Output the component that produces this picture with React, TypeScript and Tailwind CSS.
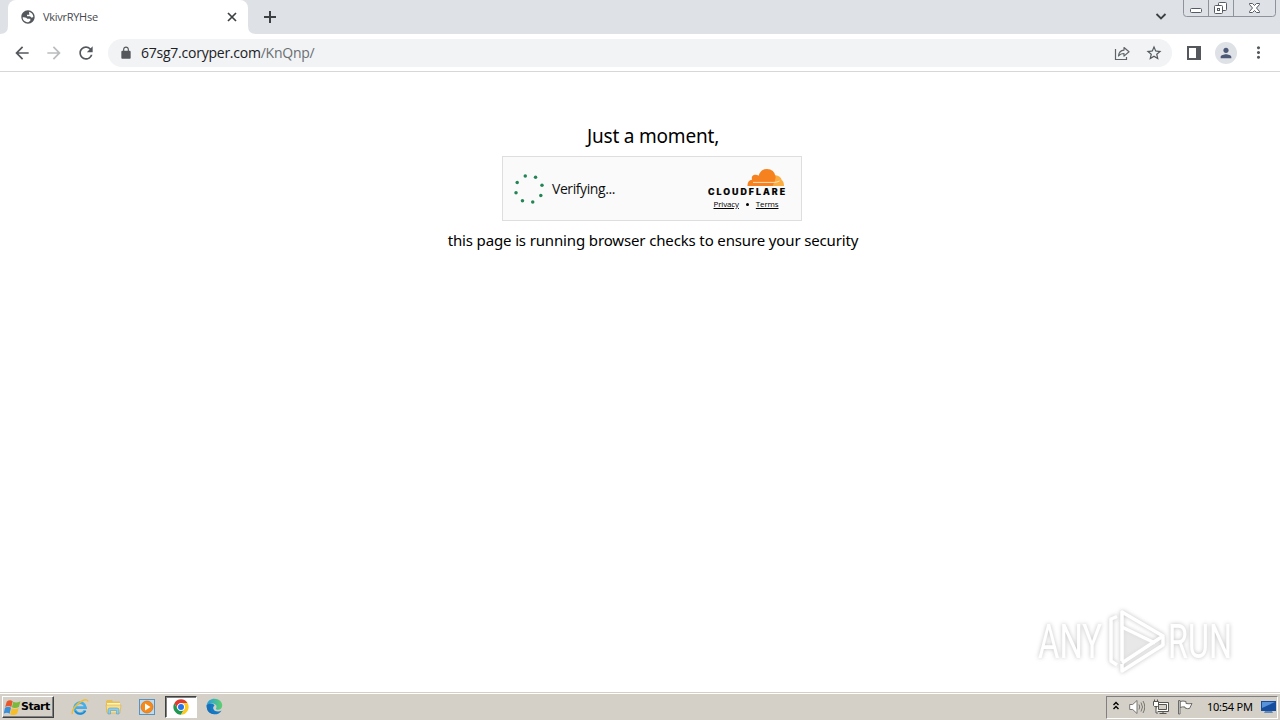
import type { ReactNode } from "react";

function Glyph({ d, className }: { d: string; className?: string }) {
  return (
    <svg viewBox="0 0 24 24" fill="currentColor" className={className}>
      <path d={d} />
    </svg>
  );
}

const icons = {
  globe:
    "M12 2C6.48 2 2 6.48 2 12s4.48 10 10 10 10-4.48 10-10S17.52 2 12 2zM4 12.500C6 13 9 12.500 11 14.500H15.500V17.500L12.500 20C7 20 4 16.500 4 12.500zM13.500 4.200C17 5 19.800 8 20 12L17.500 13 15 11H10.500V8.500H14z",
  back: "M20 11H7.830l5.590-5.590L12 4l-8 8 8 8 1.410-1.410L7.830 13H20v-2z",
  forward: "M12 4l-1.410 1.410L16.170 11H4v2h12.170l-5.580 5.590L12 20l8-8z",
  reload:
    "M17.650 6.350A7.958 7.958 0 0 0 12 4c-4.420 0-7.990 3.580-7.990 8s3.570 8 7.990 8c3.730 0 6.840-2.550 7.730-6h-2.080A5.990 5.990 0 0 1 12 18c-3.310 0-6-2.690-6-6s2.690-6 6-6c1.660 0 3.140.69 4.220 1.780L13 11h7V4l-2.350 2.350z",
  lock: "M18 8h-1V6c0-2.760-2.240-5-5-5S7 3.240 7 6v2H6c-1.100 0-2 .9-2 2v10c0 1.100.9 2 2 2h12c1.100 0 2-.9 2-2V10c0-1.100-.9-2-2-2zM9 8V6c0-1.660 1.340-3 3-3s3 1.340 3 3v2H9z",
  star: "M22 9.240l-7.190-.62L12 2 9.190 8.630 2 9.240l5.460 4.730L5.820 21 12 17.270 18.180 21l-1.630-7.030L22 9.240zM12 15.400l-3.760 2.270 1-4.280-3.320-2.880 4.380-.38L12 6.100l1.710 4.040 4.380.38-3.320 2.880 1 4.280L12 15.400z",
  person: "M12 12c2.210 0 4-1.790 4-4s-1.790-4-4-4-4 1.790-4 4 1.790 4 4 4zm0 2c-2.670 0-8 1.340-8 4v2h16v-2c0-2.660-5.330-4-8-4z",
  more: "M12 8c1.100 0 2-.9 2-2s-.9-2-2-2-2 .9-2 2 .9 2 2 2zm0 2c-1.100 0-2 .9-2 2s.9 2 2 2 2-.9 2-2-.9-2-2-2zm0 6c-1.100 0-2 .9-2 2s.9 2 2 2 2-.9 2-2-.9-2-2-2z",
};

function WindowButtons() {
  return (
    <svg className="block h-[18px] w-[94px]" viewBox="0 0 94 18" fill="none">
      <path d="M1.500 0V13.500Q1.500 16.500 4.500 16.500H90.500Q93.500 16.500 93.500 13.500V0M26.500 0V16.500M51.500 0V16.500" stroke="#8e939b" />
      <rect x="8.500" y="8.500" width="11" height="4" rx="1" fill="#fff" stroke="#555b65" />
      <rect x="36.500" y="2.500" width="8" height="8" rx="1" fill="#fff" stroke="#555b65" />
      <rect x="32.500" y="5.500" width="8" height="8" rx="1" fill="#fff" stroke="#555b65" />
      <rect x="35.500" y="8.500" width="2" height="2" stroke="#555b65" />
      <path d="M67.500 3.500h3l2 2 2-2h3v1l-3 3.500 3 3.500v1h-3l-2-2-2 2h-3v-1l3-3.500-3-3.500z" fill="#fff" stroke="#555b65" strokeLinejoin="round" />
    </svg>
  );
}

function TabStrip() {
  return (
    <div className="flex h-[34px] bg-[#dee1e6]">
      <svg className="h-full w-2 shrink-0" viewBox="0 0 8 34">
        <path d="M0 34Q8 34 8 26V34z" fill="#fff" />
      </svg>
      <div className="flex h-full w-[240px] items-center rounded-t-lg bg-white pl-3 pr-[10px] text-[#45494d]">
        <Glyph d={icons.globe} className="size-4 text-[#54585d]" />
        <span className="ml-[7px] font-['Open_Sans',sans-serif] text-[11px] leading-4 tracking-[-0.28px]">VkivrRYHse</span>
        <svg className="ml-auto size-3" viewBox="0 0 12 12" stroke="#3c4043" strokeWidth="1.7">
          <path d="M2 2l8 8M10 2l-8 8" />
        </svg>
      </div>
      <svg className="h-full w-2 shrink-0" viewBox="0 0 8 34">
        <path d="M8 34Q0 34 0 26V34z" fill="#fff" />
      </svg>
      <svg className="ml-[7px] mt-[10px] size-[14px]" viewBox="0 0 14 14" stroke="#3c4043" strokeWidth="2">
        <path d="M7 1v12M1 7h12" />
      </svg>
      <svg className="ml-auto mt-[12px] h-[9px] w-3" viewBox="0 0 12 9" fill="none" stroke="#3c4043" strokeWidth="1.8">
        <path d="M1.500 2l4.500 4.500L10.500 2" />
      </svg>
      <div className="ml-[15px] mr-1">
        <WindowButtons />
      </div>
    </div>
  );
}

function Toolbar() {
  return (
    <div className="flex h-[38px] items-center border-b border-[#d5d7da] bg-white pl-3 pr-3 text-[#54585d]">
      <Glyph d={icons.back} className="size-5" />
      <Glyph d={icons.forward} className="ml-3 size-5 text-[#babcbe]" />
      <Glyph d={icons.reload} className="ml-3 size-5" />
      <div className="ml-3 flex h-7 w-[1064px] items-center rounded-full bg-[#f1f3f4] pl-[11px] pr-[9px]">
        <Glyph d={icons.lock} className="size-[14px]" />
        <span className="ml-[8px] whitespace-nowrap font-['Open_Sans',sans-serif] text-[14px] leading-5 tracking-[-0.24px] text-[#202124]">
          67sg7.coryper.com<span className="text-[#6a6e73]">/KnQnp/</span>
        </span>
        <svg className="ml-auto size-4" viewBox="0 0 16 16" fill="none" stroke="#5f6368" strokeWidth="1.2">
          <path d="M1.500 4v10.500H12.500V12" />
          <path d="M4.500 11c.4-4 2.300-5.700 5.500-5.900V2.500L15 6.800l-5 4.300V8.500c-2.500 0-4.200.7-5.500 2.500z" strokeLinejoin="round" />
        </svg>
        <Glyph d={icons.star} className="ml-[15px] size-[18px]" />
      </div>
      <svg className="ml-[15px] h-[14px] w-[14px]" viewBox="0 0 14 14">
        <path d="M0 0h14v14H0zM2 2v10h7V2z" fill="#54585d" fillRule="evenodd" />
      </svg>
      <div className="ml-[14px] flex size-[22px] items-center justify-center rounded-full bg-[#dee1e6]">
        <Glyph d={icons.person} className="size-4 text-[#4b5876]" />
      </div>
      <Glyph d={icons.more} className="ml-[12px] size-[19px]" />
    </div>
  );
}

const SPINNER_DOTS = 8;

function Spinner() {
  return (
    <svg className="size-8" viewBox="-16 -16 32 32" fill="#238556">
      {Array.from({ length: SPINNER_DOTS }, (_, i) => {
        const angle = ((i * 360) / SPINNER_DOTS - 16) * (Math.PI / 180);
        return <circle key={i} cx={Math.sin(angle) * 13.5} cy={-Math.cos(angle) * 13.5} r="1.75" />;
      })}
    </svg>
  );
}

function CloudflareLogo() {
  return (
    <svg className="block h-[29px] w-[78px] overflow-visible" viewBox="0 0 78 29">
      <path d="M65 19L64 9.500Q66 8 68.500 8.300Q73.500 8.700 74.700 13Q77 14.500 77 19z" fill="#fbad41" />
      <path d="M40.500 19Q40.300 13.300 45 12.800Q44 8.600 47.500 7.800Q50 7.400 51.600 8.700Q53.500 2 60 2Q67.300 2.200 68.600 9.500Q69 12 67 15.500L65.800 19z" fill="#f6821f" />
      <path d="M46 15.400H67.500Q70 15.200 72.500 14" fill="none" stroke="#fff1e4" strokeWidth=".8" />
      <text x="1" y="28" textLength="77" lengthAdjust="spacing" className="fill-black stroke-black font-['Inter',sans-serif] text-[8.800px] font-extrabold" strokeWidth=".2">
        CLOUDFLARE
      </text>
    </svg>
  );
}

function ChallengeCard() {
  return (
    <div className="mr-[2px] flex h-[65px] w-[300px] items-center border border-[#dedede] bg-[#fafafa] pl-[10px]">
      <Spinner />
      <span className="ml-[7px] font-['Open_Sans',sans-serif] text-[14px] leading-5 tracking-[-0.42px] text-[#111]">Verifying...</span>
      <div className="ml-auto mr-4 flex flex-col items-center">
        <CloudflareLogo />
        <div className="mt-[3px] mb-px flex items-center gap-[7px] font-['Open_Sans',sans-serif] text-[8px] leading-[10px] tracking-[-0.15px] text-black">
          <span className="underline underline-offset-[1px]">Privacy</span>
          <span className="size-[3px] rounded-full bg-black" />
          <span className="underline underline-offset-[1px]">Terms</span>
        </div>
      </div>
    </div>
  );
}

function Watermark() {
  const label = "font-['Roboto',sans-serif] text-[49px]";
  return (
    <svg
      className="absolute right-[28px] bottom-[13px] h-[76px] w-[222px] overflow-visible drop-shadow-[0_0_2px_rgba(0,0,0,0.25)]"
      viewBox="0 0 222 76"
      fill="#fff"
    >
      <text x="8" y="55" textLength="64" lengthAdjust="spacingAndGlyphs" className={label}>
        ANY
      </text>
      <text x="138" y="55" textLength="64" lengthAdjust="spacingAndGlyphs" className={label}>
        RUN
      </text>
      <path d="M92 24L124 41L92 59z" fill="#f1f1f1" opacity=".5" />
      <g fill="none" stroke="#fff" strokeWidth="3.5" strokeLinejoin="round">
        <path d="M87 13.500L81 16V58L87 62" />
        <path d="M92 58V9L133 33L92 60" />
        <path d="M92 24L125 40" />
        <path d="M92 61V68L133 42V34" />
      </g>
    </svg>
  );
}

function Page() {
  return (
    <main className="relative flex flex-1 flex-col items-center bg-white pl-[26px] pt-[50px] text-black">
      <h1 className="font-['Noto_Sans','Open_Sans',sans-serif] text-[19px] leading-[28px] tracking-[-0.2px]">Just a moment,</h1>
      <div className="mt-[6px]">
        <ChallengeCard />
      </div>
      <p className="mt-[8px] whitespace-nowrap font-['Noto_Sans','Open_Sans',sans-serif] text-[15px] leading-[22px] tracking-[-0.14px]">
        this page is running browser checks to ensure your security
      </p>
      <Watermark />
    </main>
  );
}

function WindowsFlag() {
  return (
    <svg className="size-[17px] shrink-0" viewBox="0 0 17 17">
      <path d="M2.800 2.500Q6 .3 8.700 2.300L7.300 8Q4.500 6.200 1.200 8z" fill="#e8562a" />
      <path d="M9.300 2.800Q12 4.600 16.500 2.300L14.900 8Q11 10 7.900 8.300z" fill="#7cb83b" />
      <path d="M1 8.700Q4.500 6.900 7 8.700L5.600 14.700Q3 12.800-.3 14.700z" fill="#3b8fd6" />
      <path d="M7.700 9.200Q11 10.800 14.700 8.900L13 15Q9.500 17 6.200 15.200z" fill="#f7bd26" />
    </svg>
  );
}

function InternetExplorerIcon() {
  return (
    <svg className="size-[18px]" viewBox="0 0 18 18" fill="none">
      <path d="M14 12.500A5.500 5.500 0 1 1 14.500 9.700H5" stroke="#45aee8" strokeWidth="2.800" />
      <path d="M14.600 12.800A6.300 6.300 0 0 1 4 13.200" stroke="#2185ca" strokeWidth="1.200" />
      <path d="M1.500 16C0 13 5 6 11 3Q16.500.5 17 3.500" stroke="#edbd37" strokeWidth="1.500" />
    </svg>
  );
}

function ExplorerIcon() {
  return (
    <svg className="size-[17px]" viewBox="0 0 17 17">
      <path d="M1 3.500l1-1.500h5l1 1.500h7V14H1z" fill="#e7bf53" />
      <path d="M2 5h13v4H2z" fill="#fff5bd" />
      <path d="M1 7h15l-1 8H2z" fill="#f8df88" stroke="#d6ac46" strokeWidth=".6" />
      <path d="M3 16v-4q0-2 2-2h7q2 0 2 2v4h-2.500v-3.500h-6V16z" fill="#8ccbec" stroke="#5a9fc8" strokeWidth=".6" />
    </svg>
  );
}

function MediaPlayerIcon() {
  return (
    <svg className="size-4" viewBox="0 0 16 16">
      <rect x=".5" y=".5" width="15" height="15" fill="#bcdcf2" stroke="#5b91bf" />
      <circle cx="8" cy="8" r="6" fill="#f58a1b" stroke="#dc6d0b" strokeWidth=".7" />
      <path d="M6 4.500v7L11.500 8z" fill="#fff" />
    </svg>
  );
}

function ChromeIcon() {
  return (
    <svg className="size-4" viewBox="0 0 48 48">
      <circle cx="24" cy="24" r="23" fill="#fff" />
      <path d="M24 1A23 23 0 0 0 4.100 12.500L14 29.700A11.500 11.500 0 0 1 24 12.500H43.900A23 23 0 0 0 24 1z" fill="#df3c2f" />
      <path d="M4.100 12.500A23 23 0 0 0 24 47L34 29.700A11.500 11.500 0 0 1 14 29.700z" fill="#219751" />
      <path d="M43.900 12.500H24A11.500 11.500 0 0 1 34 29.700L24 47A23 23 0 0 0 43.900 12.500z" fill="#fbc91f" />
      <circle cx="24" cy="24" r="11.500" fill="#fff" />
      <circle cx="24" cy="24" r="9" fill="#2973e8" />
    </svg>
  );
}

function EdgeIcon() {
  return (
    <svg className="size-[17px]" viewBox="0 0 24 24">
      <defs>
        <linearGradient id="edge-top" x1="0" x2="1">
          <stop offset="0" stopColor="#259fe1" />
          <stop offset="1" stopColor="#60d06b" />
        </linearGradient>
      </defs>
      <path d="M1 10C2 4 6.500 1 12 1C18.500 1 23 5.500 23 10.500C23 14.500 20 16.500 17 16.500C14.500 16.500 13.300 15.500 14.500 14C17 8 7 5.500 1 10z" fill="url(#edge-top)" />
      <path d="M1 10C4 6.500 11 7 12 11C9 12 9 19 17 19Q20 19 22 17.500C20 21.500 16 23 12.500 23C5 23 .5 18 1 10z" fill="#137bc5" />
      <path d="M8 10C4 13 6 21.500 12.500 23C5 23 .5 18 1 10Q5 7.500 8 10z" fill="#1a70b8" />
    </svg>
  );
}

function TraySlot({ children, className }: { children: ReactNode; className?: string }) {
  return <div className={`flex items-center ${className ?? ""}`}>{children}</div>;
}

function Taskbar() {
  return (
    <footer className="flex h-[28px] items-center border-t border-[#d4d0c8] bg-[#d4d0c8] pl-[2px] shadow-[inset_0_1px_0_#fff]">
      <button className="mt-px flex h-[22px] w-[52px] items-center border border-t-white border-l-white border-r-[#404040] border-b-[#404040] pl-px shadow-[inset_-1px_-1px_0_#808080]">
        <WindowsFlag />
        <span className="font-['DejaVu_Sans',sans-serif] text-[11px] leading-4 font-bold tracking-[-0.5px] text-black">Start</span>
      </button>
      <div className="ml-[17px] flex items-center">
        <InternetExplorerIcon />
        <div className="ml-4">
          <ExplorerIcon />
        </div>
        <div className="ml-[17px]">
          <MediaPlayerIcon />
        </div>
        <div className="ml-[10px] flex h-[22px] w-[32px] items-center justify-center border border-t-[#404040] border-l-[#404040] border-r-white border-b-white bg-white shadow-[inset_1px_1px_0_#808080]">
          <ChromeIcon />
        </div>
        <div className="ml-[9px]">
          <EdgeIcon />
        </div>
      </div>
      <div className="mt-px mr-[2px] ml-auto flex h-[23px] w-[172px] items-center border border-t-[#808080] border-l-[#808080] border-r-white border-b-white pl-[6px]">
        <svg className="mb-[3px] h-[9px] w-[6px]" viewBox="0 0 6 9" fill="none" stroke="#000" strokeWidth="1.4">
          <path d="M.5 4L3 1.500 5.500 4M.5 8L3 5.500 5.500 8" />
        </svg>
        <TraySlot className="ml-[10px]">
          <svg className="size-4" viewBox="0 0 16 16" fill="#fff" stroke="#6b6b68" strokeWidth=".9">
            <path d="M.7 5.500h3L8 1.500v13l-4.300-4h-3z" />
            <path d="M10 5.500q1.500 2.500 0 5M12 3.500q3 4.500 0 9M14 2q3.500 6 0 12" fill="none" />
          </svg>
        </TraySlot>
        <TraySlot className="ml-2">
          <svg className="size-4" viewBox="0 0 16 16" fill="#fff" stroke="#555550" strokeWidth="1">
            <path d="M3.500 3.500h12v9h-12z" />
            <path d="M5.500 5.500h8v5h-8z" fill="#d4d0c8" />
            <path d="M6.500 14.500h7M10 12.500v2M3 7v7h2" />
            <path d="M.5 2.500h5v4l-1 1h-3l-1-1zM1.500.5v2M4.500.5v2" />
          </svg>
        </TraySlot>
        <TraySlot className="ml-2">
          <svg className="size-4" viewBox="0 0 16 16" fill="#fff" stroke="#6b6b68" strokeWidth="1">
            <path d="M3 2.500q3-1 6 0v2q3 .5 6 0l-2.500 5q-2 .5-4.500-.5v-1Q5.500 7.500 3 8.500z" />
            <path d="M1.500 1.500h1.500v13.500H1.500z" />
          </svg>
        </TraySlot>
        <span className="ml-[14px] whitespace-nowrap font-['Noto_Sans',sans-serif] text-[11px] leading-4 tracking-[-0.25px] text-black">10:54 PM</span>
        <svg className="ml-auto h-4 w-4" viewBox="0 0 16 16">
          <path d="M0 2h15v10H0z" fill="#174d9d" />
          <path d="M1 3h13L1 9z" fill="#5793db" />
          <path d="M4 12h7l1 2H3z" fill="#6389b7" />
        </svg>
      </div>
    </footer>
  );
}

export default function App() {
  return (
    <div className="flex h-screen w-screen flex-col overflow-hidden bg-white">
      <TabStrip />
      <Toolbar />
      <Page />
      <Taskbar />
    </div>
  );
}
